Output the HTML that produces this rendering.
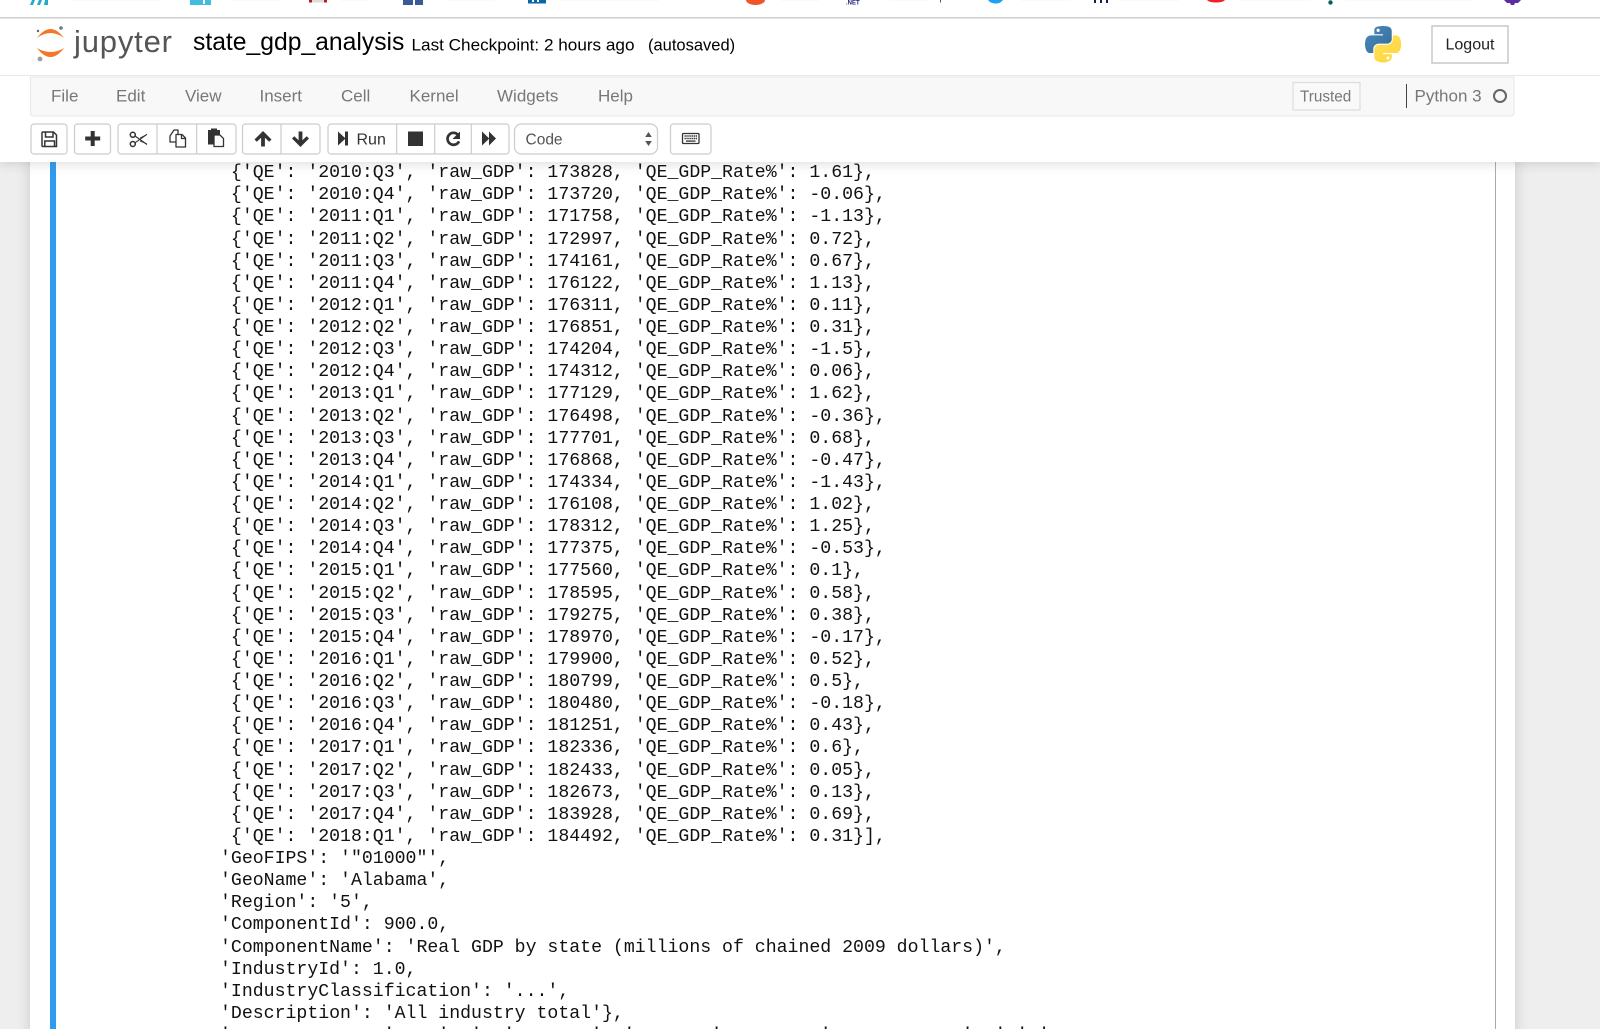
<!DOCTYPE html>
<html lang="en">
<head>
<meta charset="utf-8">
<title>state_gdp_analysis</title>
<style>
html,body{margin:0;padding:0;width:1600px;height:1029px;overflow:hidden;background:#eee;}
#wrap{position:relative;width:1600px;height:1029px;overflow:hidden;background:#eee;filter:blur(.3px);}
#nb{position:absolute;left:30px;top:150px;width:1485px;height:899px;background:#fff;box-shadow:0 0 12px 1px rgba(87,87,87,.2);}
#bar{position:absolute;left:50px;top:150px;width:6px;height:899px;background:#2f9bf0;}
#rb{position:absolute;left:1495px;top:150px;width:1.2px;height:899px;background:#aaa;}
pre{position:absolute;left:220px;top:162.200px;margin:0;font:18.2px/22.12px "Liberation Mono",monospace;color:#111;white-space:pre;}
#top{position:absolute;left:0;top:0;width:1600px;height:162px;background:#fff;box-shadow:0 2px 10px rgba(87,87,87,.2);}
svg text{font-family:"Liberation Sans",sans-serif;}
</style>
</head>
<body>
<div id="wrap">
<div id="nb"></div>
<div id="bar"></div>
<div id="rb"></div>
<pre> {'QE': '2010:Q3', 'raw_GDP': 173828, 'QE_GDP_Rate%': 1.61},
 {'QE': '2010:Q4', 'raw_GDP': 173720, 'QE_GDP_Rate%': -0.06},
 {'QE': '2011:Q1', 'raw_GDP': 171758, 'QE_GDP_Rate%': -1.13},
 {'QE': '2011:Q2', 'raw_GDP': 172997, 'QE_GDP_Rate%': 0.72},
 {'QE': '2011:Q3', 'raw_GDP': 174161, 'QE_GDP_Rate%': 0.67},
 {'QE': '2011:Q4', 'raw_GDP': 176122, 'QE_GDP_Rate%': 1.13},
 {'QE': '2012:Q1', 'raw_GDP': 176311, 'QE_GDP_Rate%': 0.11},
 {'QE': '2012:Q2', 'raw_GDP': 176851, 'QE_GDP_Rate%': 0.31},
 {'QE': '2012:Q3', 'raw_GDP': 174204, 'QE_GDP_Rate%': -1.5},
 {'QE': '2012:Q4', 'raw_GDP': 174312, 'QE_GDP_Rate%': 0.06},
 {'QE': '2013:Q1', 'raw_GDP': 177129, 'QE_GDP_Rate%': 1.62},
 {'QE': '2013:Q2', 'raw_GDP': 176498, 'QE_GDP_Rate%': -0.36},
 {'QE': '2013:Q3', 'raw_GDP': 177701, 'QE_GDP_Rate%': 0.68},
 {'QE': '2013:Q4', 'raw_GDP': 176868, 'QE_GDP_Rate%': -0.47},
 {'QE': '2014:Q1', 'raw_GDP': 174334, 'QE_GDP_Rate%': -1.43},
 {'QE': '2014:Q2', 'raw_GDP': 176108, 'QE_GDP_Rate%': 1.02},
 {'QE': '2014:Q3', 'raw_GDP': 178312, 'QE_GDP_Rate%': 1.25},
 {'QE': '2014:Q4', 'raw_GDP': 177375, 'QE_GDP_Rate%': -0.53},
 {'QE': '2015:Q1', 'raw_GDP': 177560, 'QE_GDP_Rate%': 0.1},
 {'QE': '2015:Q2', 'raw_GDP': 178595, 'QE_GDP_Rate%': 0.58},
 {'QE': '2015:Q3', 'raw_GDP': 179275, 'QE_GDP_Rate%': 0.38},
 {'QE': '2015:Q4', 'raw_GDP': 178970, 'QE_GDP_Rate%': -0.17},
 {'QE': '2016:Q1', 'raw_GDP': 179900, 'QE_GDP_Rate%': 0.52},
 {'QE': '2016:Q2', 'raw_GDP': 180799, 'QE_GDP_Rate%': 0.5},
 {'QE': '2016:Q3', 'raw_GDP': 180480, 'QE_GDP_Rate%': -0.18},
 {'QE': '2016:Q4', 'raw_GDP': 181251, 'QE_GDP_Rate%': 0.43},
 {'QE': '2017:Q1', 'raw_GDP': 182336, 'QE_GDP_Rate%': 0.6},
 {'QE': '2017:Q2', 'raw_GDP': 182433, 'QE_GDP_Rate%': 0.05},
 {'QE': '2017:Q3', 'raw_GDP': 182673, 'QE_GDP_Rate%': 0.13},
 {'QE': '2017:Q4', 'raw_GDP': 183928, 'QE_GDP_Rate%': 0.69},
 {'QE': '2018:Q1', 'raw_GDP': 184492, 'QE_GDP_Rate%': 0.31}],
'GeoFIPS': '"01000"',
'GeoName': 'Alabama',
'Region': '5',
'ComponentId': 900.0,
'ComponentName': 'Real GDP by state (millions of chained 2009 dollars)',
'IndustryId': 1.0,
'IndustryClassification': '...',
'Description': 'All industry total'},
'              '    '  '  '       '  '       '         '            '  ' ' '</pre>

<div id="top">
<svg width="1600" height="162" viewBox="0 0 1600 162" xmlns="http://www.w3.org/2000/svg" style="display:block">
  <!-- cropped bookmarks row -->
  <g>
    <path d="M30 5l2-5h3l-2 5zM37 5l2-5h3l-2 5zM44 5l1-5h3v5z" fill="#22aac8"/>
    <rect x="190" y="0" width="21" height="5" fill="#41bce0"/><rect x="203" y="0" width="2" height="4" fill="#fff"/>
    <rect x="309" y="0" width="18" height="2.5" fill="#ddd"/><rect x="309" y="0" width="3" height="2.5" fill="#b02020"/><rect x="324" y="0" width="3" height="2.5" fill="#b02020"/>
    <rect x="403" y="0" width="20" height="5" fill="#3b5998"/><rect x="413" y="0" width="2" height="5" fill="#fff"/>
    <rect x="528" y="0" width="18" height="3.5" fill="#0b66a8"/><rect x="532" y="0" width="2" height="2" fill="#fff"/><rect x="537" y="0" width="2" height="2" fill="#fff"/>
    <path d="M746 0h19a9.500 5 0 0 1-19 0z" fill="#f0552a"/>
    <text x="846" y="4.500" font-size="6" font-weight="bold" fill="#23237a">.NET</text>
    <rect x="940" y="0" width="1" height="2.500" fill="#555"/>
    <path d="M988 0h15q-3 4-8 3.500t-7-3.500z" fill="#1da1f2"/>
    <path d="M1094 0h2v3h-2zM1100 0h2v3h-2zM1106 0h2v3h-2z" fill="#14204f"/>
    <path d="M1207 0h18q-2 2.500-9 2.500t-9-2.500z" fill="#f0202a"/>
    <circle cx="1330.500" cy="2.500" r="2.200" fill="#0c5c5c"/>
    <path d="M1504 0h17l-3 3h-3l-1 2h-3l-1-2h-3z" fill="#5b2da0"/>
    <g fill="#f6f6f6">
      <rect x="72" y="0" width="90" height=".6"/><rect x="232" y="0" width="50" height=".6"/><rect x="340" y="0" width="30" height=".6"/>
      <rect x="445" y="0" width="50" height=".6"/><rect x="560" y="0" width="100" height=".6"/><rect x="780" y="0" width="40" height=".6"/>
      <rect x="890" y="0" width="40" height=".6"/><rect x="1020" y="0" width="50" height=".6"/><rect x="1120" y="0" width="60" height=".6"/>
      <rect x="1240" y="0" width="70" height=".6"/><rect x="1345" y="0" width="130" height=".6"/>
    </g>
  </g>
  <rect x="0" y="17" width="1600" height="1.500" fill="#cfcfcf"/>
  <rect x="0" y="75" width="1600" height="1" fill="#e7e7e7"/>

  <!-- jupyter logo -->
  <path d="M37 38Q50.500 20 64 38Q50.500 28 37 38z" fill="#f37726"/>
  <path d="M37 48Q50.500 66 64 48Q50.500 56 37 48z" fill="#f37726"/>
  <circle cx="61" cy="28" r="1.800" fill="#767677"/>
  <circle cx="38" cy="31" r="1.200" fill="#616262"/>
  <circle cx="40" cy="59" r="2.400" fill="#9e9e9e"/>
  <text x="74" y="52" font-size="31" fill="#555" textLength="98" lengthAdjust="spacing">jupyter</text>

  <text x="193" y="50" font-size="24.700" fill="#000">state_gdp_analysis</text>
  <text x="411.500" y="50.500" font-size="16.800" fill="#000" textLength="223" lengthAdjust="spacingAndGlyphs">Last Checkpoint: 2 hours ago</text>
  <text x="648" y="50.500" font-size="16.500" fill="#000">(autosaved)</text>

  <!-- python logo -->
  <defs>
    <linearGradient id="pb" x1="0" y1="0" x2="1" y2="1"><stop offset="0" stop-color="#4a8bbd"/><stop offset="1" stop-color="#346a97"/></linearGradient>
    <linearGradient id="py" x1="0" y1="0" x2="1" y2="1"><stop offset="0" stop-color="#ffe15a"/><stop offset="1" stop-color="#ffd43b"/></linearGradient>
  </defs>
  <g transform="translate(1365 26) scale(.325)">
    <path fill="url(#pb)" fill-rule="evenodd" d="M54.919 0.001c-4.584 0.022-8.961 0.413-12.813 1.095C30.760 3.099 28.700 7.295 28.700 15.032v10.219h26.813v3.406H18.638c-7.793 0-14.616 4.684-16.750 13.594-2.462 10.213-2.571 16.586 0 27.250 1.906 7.938 6.458 13.594 14.250 13.594h9.219V70.844c0-8.850 7.657-16.656 16.750-16.656h26.781c7.454 0 13.406-6.138 13.406-13.625V15.032c0-7.266-6.130-12.725-13.406-13.937C64.282 0.328 59.502-0.020 54.919 0.001zM40.419 8.220c2.770 0 5.031 2.299 5.031 5.125 0 2.816-2.262 5.094-5.031 5.094-2.780 0-5.031-2.277-5.031-5.094 0-2.826 2.252-5.125 5.031-5.125z"/>
    <path fill="url(#py)" fill-rule="evenodd" d="M85.638 28.657v11.906c0 9.231-7.826 17-16.750 17H42.106c-7.336 0-13.406 6.279-13.406 13.625v25.531c0 7.266 6.319 11.540 13.406 13.625 8.487 2.496 16.626 2.947 26.781 0 6.750-1.954 13.406-5.888 13.406-13.625V86.500H55.513v-3.406H95.700c7.793 0 10.696-5.436 13.406-13.594 2.799-8.399 2.680-16.476 0-27.250-1.926-7.757-5.604-13.594-13.406-13.594zM70.575 93.313c2.780 0 5.031 2.277 5.031 5.094 0 2.826-2.252 5.125-5.031 5.125-2.770 0-5.031-2.299-5.031-5.125 0-2.816 2.262-5.094 5.031-5.094z"/>
  </g>

  <!-- logout -->
  <rect x="1432" y="26" width="76" height="37" fill="#fff" stroke="#ccc" stroke-width="1.600"/>
  <text x="1445.500" y="49.500" font-size="16" fill="#222">Logout</text>

  <!-- menubar -->
  <path d="M30.500 77H1514V113a3 3 0 0 1-3 3H33.500a3 3 0 0 1-3-3z" fill="#f8f8f8" stroke="#e7e7e7"/>
  <g font-size="17" fill="#777">
    <text x="51" y="101.500">File</text>
    <text x="116" y="101.500">Edit</text>
    <text x="185" y="101.500">View</text>
    <text x="259.500" y="101.500">Insert</text>
    <text x="341" y="101.500">Cell</text>
    <text x="409.500" y="101.500">Kernel</text>
    <text x="497" y="101.500">Widgets</text>
    <text x="598" y="101.500">Help</text>
    <text x="1414.500" y="101.500">Python 3</text>
  </g>
  <rect x="1293" y="82.500" width="67" height="27.500" fill="#f9f9f9" stroke="#ddd" stroke-width="1.200"/>
  <text x="1300" y="101.500" font-size="15.300" fill="#777">Trusted</text>
  <rect x="1406" y="84" width="1" height="24" fill="#444"/>
  <circle cx="1500" cy="96" r="6" fill="none" stroke="#666" stroke-width="2"/>

  <!-- toolbar buttons -->
  <g fill="#fff" stroke="#ccc" stroke-width="1.200">
    <rect x="31" y="124" width="36" height="30" rx="3"/>
    <rect x="74.500" y="124" width="36" height="30" rx="3"/>
    <rect x="118" y="124" width="118" height="30" rx="3"/>
    <rect x="242.500" y="124" width="77.500" height="30" rx="3"/>
    <rect x="328" y="124" width="181" height="30" rx="3"/>
    <rect x="514.500" y="124" width="143" height="30" rx="7"/>
    <rect x="670.500" y="124" width="40.500" height="30" rx="3"/>
    <path d="M157 124v30M196.700 124v30M281 124v30M396.700 124v30M434.700 124v30M471.300 124v30" fill="none"/>
  </g>

  <!-- save -->
  <g fill="none" stroke="#333" stroke-width="1.500">
    <path d="M43 132h10.500l3 3v11.500H43a1 1 0 0 1-1-1v-12.500a1 1 0 0 1 1-1z"/>
    <path d="M45.500 132v5h7.500v-5M44.800 146.500v-5.500h9.700v5.500"/>
  </g>
  <!-- plus -->
  <path d="M90.700 131h4v5.500h5.500v4h-5.500v5.500h-4v-5.500h-5.500v-4h5.500z" fill="#333"/>
  <!-- scissors -->
  <g fill="none" stroke="#333">
    <circle cx="132.800" cy="134.800" r="2.500" stroke-width="1.500"/>
    <circle cx="132.800" cy="144" r="2.500" stroke-width="1.500"/>
    <path d="M135 136l12 8.500M135 142.800l12-8.500" stroke-width="1.100"/>
    <path d="M140 138l7-3.500M140 141l7 3" stroke-width=".7"/>
  </g>
  <!-- copy -->
  <g fill="#fff" stroke="#333" stroke-width="1.300" stroke-linejoin="round">
    <path d="M170 136l4-6h4v12h-8z"/>
    <path d="M176 134.500h6l3.500 3.500v9h-9.500z"/>
    <path d="M181.500 134.500v4h4" fill="none"/>
  </g>
  <!-- paste -->
  <path d="M208 130h12v14.500h-12z" fill="#333"/>
  <rect x="211" y="128.500" width="6" height="3" fill="#333"/>
  <path d="M214 135h6l3.500 3.500v8h-9.500z" fill="#fff" stroke="#333" stroke-width="1.300"/>
  <!-- arrows -->
  <path d="M263 131l8.500 8.500-2.300 2.300-4.300-4.100V146.500h-3.800v-8.800l-4.300 4.100-2.300-2.300z" fill="#333"/>
  <path d="M300.500 147l-8.500-8.500 2.300-2.300 4.300 4.100V131.500h3.800v8.800l4.300-4.100 2.300 2.300z" fill="#333"/>
  <!-- run -->
  <path d="M338 131.500l7 6.500V131.500h3v14h-3v-6.500l-7 6.500z" fill="#333"/>
  <text x="356.500" y="144.500" font-size="16" fill="#333">Run</text>
  <!-- stop -->
  <rect x="408" y="131.500" width="15" height="14.500" fill="#333"/>
  <!-- restart -->
  <path d="M458 134.800a6 6 0 1 0 1 6.500" fill="none" stroke="#333" stroke-width="2.700"/>
  <path d="M460 131.500v7.500h-7.500z" fill="#333"/>
  <!-- fast forward -->
  <path d="M482 131.500l7 6.800V131.500l7 7-7 7v-6.800l-7 6.800z" fill="#333"/>
  <!-- select -->
  <text x="525.500" y="144.500" font-size="15.500" fill="#555">Code</text>
  <path d="M648.500 132l3.300 5h-6.600zM648.500 146l3.300-5h-6.600z" fill="#555"/>
  <!-- keyboard -->
  <rect x="682.500" y="133.500" width="16.500" height="10" rx="1" fill="#fff" stroke="#333" stroke-width="1.300"/>
  <path d="M684.500 136h12.500M684.500 138.500h12.500" stroke="#333" stroke-width="1.400" stroke-dasharray="1.300 .6" fill="none"/>
  <path d="M686 141.100h9.500" stroke="#333" stroke-width="1.300" fill="none"/>
</svg>
</div>
</div>
</body>
</html>
